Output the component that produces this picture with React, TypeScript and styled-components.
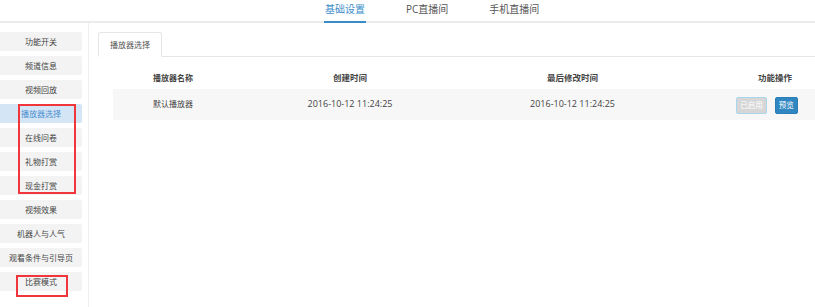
import React from "react"
import styled, { createGlobalStyle } from "styled-components"

const GlobalStyle = createGlobalStyle`
   html, body {
      margin: 0;
      padding: 0;
      background: #ffffff;
      font-family: "Open Sans", "Noto Sans CJK SC", sans-serif;
      color: #333;
   }
`

const topTabs = ["基础设置", "PC直播间", "手机直播间"]

const menuItems = [
   "功能开关",
   "频道信息",
   "视频回放",
   "播放器选择",
   "在线问卷",
   "礼物打赏",
   "现金打赏",
   "视频效果",
   "机器人与人气",
   "观看条件与引导页",
   "比赛模式",
]

function App() {
   return (
      <Page>
         <GlobalStyle />
         <TopBar>
            {topTabs.map((tab, index) => (
               <TopTab key={tab} active={index === 0}>
                  {tab}
               </TopTab>
            ))}
         </TopBar>
         <Body>
            <Sidebar>
               {menuItems.map((item, index) => (
                  <MenuItem key={item} active={index === 3}>
                     {item}
                  </MenuItem>
               ))}
               <Marker style={{ left: 18, top: 81, width: 58, height: 90 }} />
               <Marker style={{ left: 16, top: 252, width: 52, height: 22 }} />
            </Sidebar>
            <Content>
               <TabStrip>
                  <Tab>播放器选择</Tab>
               </TabStrip>
               <Table>
                  <HeadRow>
                     <NameCell>播放器名称</NameCell>
                     <Cell>创建时间</Cell>
                     <Cell>最后修改时间</Cell>
                     <Cell>功能操作</Cell>
                  </HeadRow>
                  <DataRow>
                     <NameCell>默认播放器</NameCell>
                     <Cell>2016-10-12 11:24:25</Cell>
                     <Cell>2016-10-12 11:24:25</Cell>
                     <ActionCell>
                        <Button disabledLook>已启用</Button>
                        <Button>预览</Button>
                     </ActionCell>
                  </DataRow>
               </Table>
            </Content>
         </Body>
      </Page>
   )
}

const Page = styled.div`
   width: 815px;
   height: 307px;
   overflow: hidden;
`

const TopBar = styled.div`
   height: 21px;
   display: flex;
   padding-left: 324px;
   gap: 39px;
   border-bottom: 2px solid #ebebeb;
`

const TopTab = styled.div<{ active?: boolean }>`
   position: relative;
   padding: 1px 1px 0;
   font-size: 10px;
   line-height: 16px;
   color: ${({ active }) => (active ? "#3a8cc9" : "#555")};
   &::after {
      content: "";
      position: absolute;
      left: 0;
      right: 0;
      bottom: -2px;
      height: 2px;
      background: ${({ active }) => (active ? "#3a8cc9" : "transparent")};
   }
`

const Body = styled.div`
   display: flex;
`

const Sidebar = styled.div`
   position: relative;
   flex: none;
   width: 89px;
   height: 284px;
   box-sizing: border-box;
   padding-top: 9px;
   border-right: 1px solid #efefef;
   display: flex;
   flex-direction: column;
   gap: 5px;
`

const MenuItem = styled.div<{ active?: boolean }>`
   width: 82px;
   height: 19px;
   border-radius: 0 2px 2px 0;
   background: ${({ active }) => (active ? "#d4e5f6" : "#f3f3f3")};
   color: ${({ active }) => (active ? "#4a90cf" : "#444")};
   font-size: 8px;
   line-height: 19px;
   text-align: center;
`

const Marker = styled.div`
   position: absolute;
   border: 2px solid #f0353b;
   box-sizing: border-box;
`

const Content = styled.div`
   flex: 1;
   padding: 9px 0 0 9px;
`

const TabStrip = styled.div`
   display: flex;
   border-bottom: 1px solid #e6e6e6;
`

const Tab = styled.div`
   height: 23px;
   padding: 0 11px;
   margin-bottom: -1px;
   border: 1px solid #e6e6e6;
   border-bottom-color: #ffffff;
   border-radius: 3px 3px 0 0;
   background: #fff;
   font-size: 8px;
   line-height: 23px;
   color: #555;
`

const Table = styled.div`
   margin: 8px 0 0 15px;
   width: 780px;
`

const HeadRow = styled.div`
   display: grid;
   grid-template-columns: 137px 200px 245px 160px;
   height: 24px;
   align-items: center;
   font-size: 8.5px;
   font-weight: 700;
   color: #444;
`

const DataRow = styled(HeadRow)`
   height: 29px;
   padding-bottom: 2px;
   background: #f7f7f7;
   font-weight: 400;
   font-size: 9px;
   color: #444;
`

const Cell = styled.div`
   text-align: center;
`

const NameCell = styled.div`
   padding-left: 40px;
   font-size: 8px;
`

const ActionCell = styled.div`
   display: flex;
   justify-content: center;
   gap: 8px;
   padding-right: 16px;
   padding-top: 4px;
`

const Button = styled.div<{ disabledLook?: boolean }>`
   height: 17px;
   padding: 0 3px;
   border-radius: 2px;
   font-size: 7.5px;
   line-height: 15px;
   box-sizing: border-box;
   color: #fff;
   background: ${({ disabledLook }) => (disabledLook ? "#d6d6d6" : "#2f86c0")};
   border: 1px solid ${({ disabledLook }) => (disabledLook ? "#a9d6ee" : "#2b7db4")};
`

export default App
